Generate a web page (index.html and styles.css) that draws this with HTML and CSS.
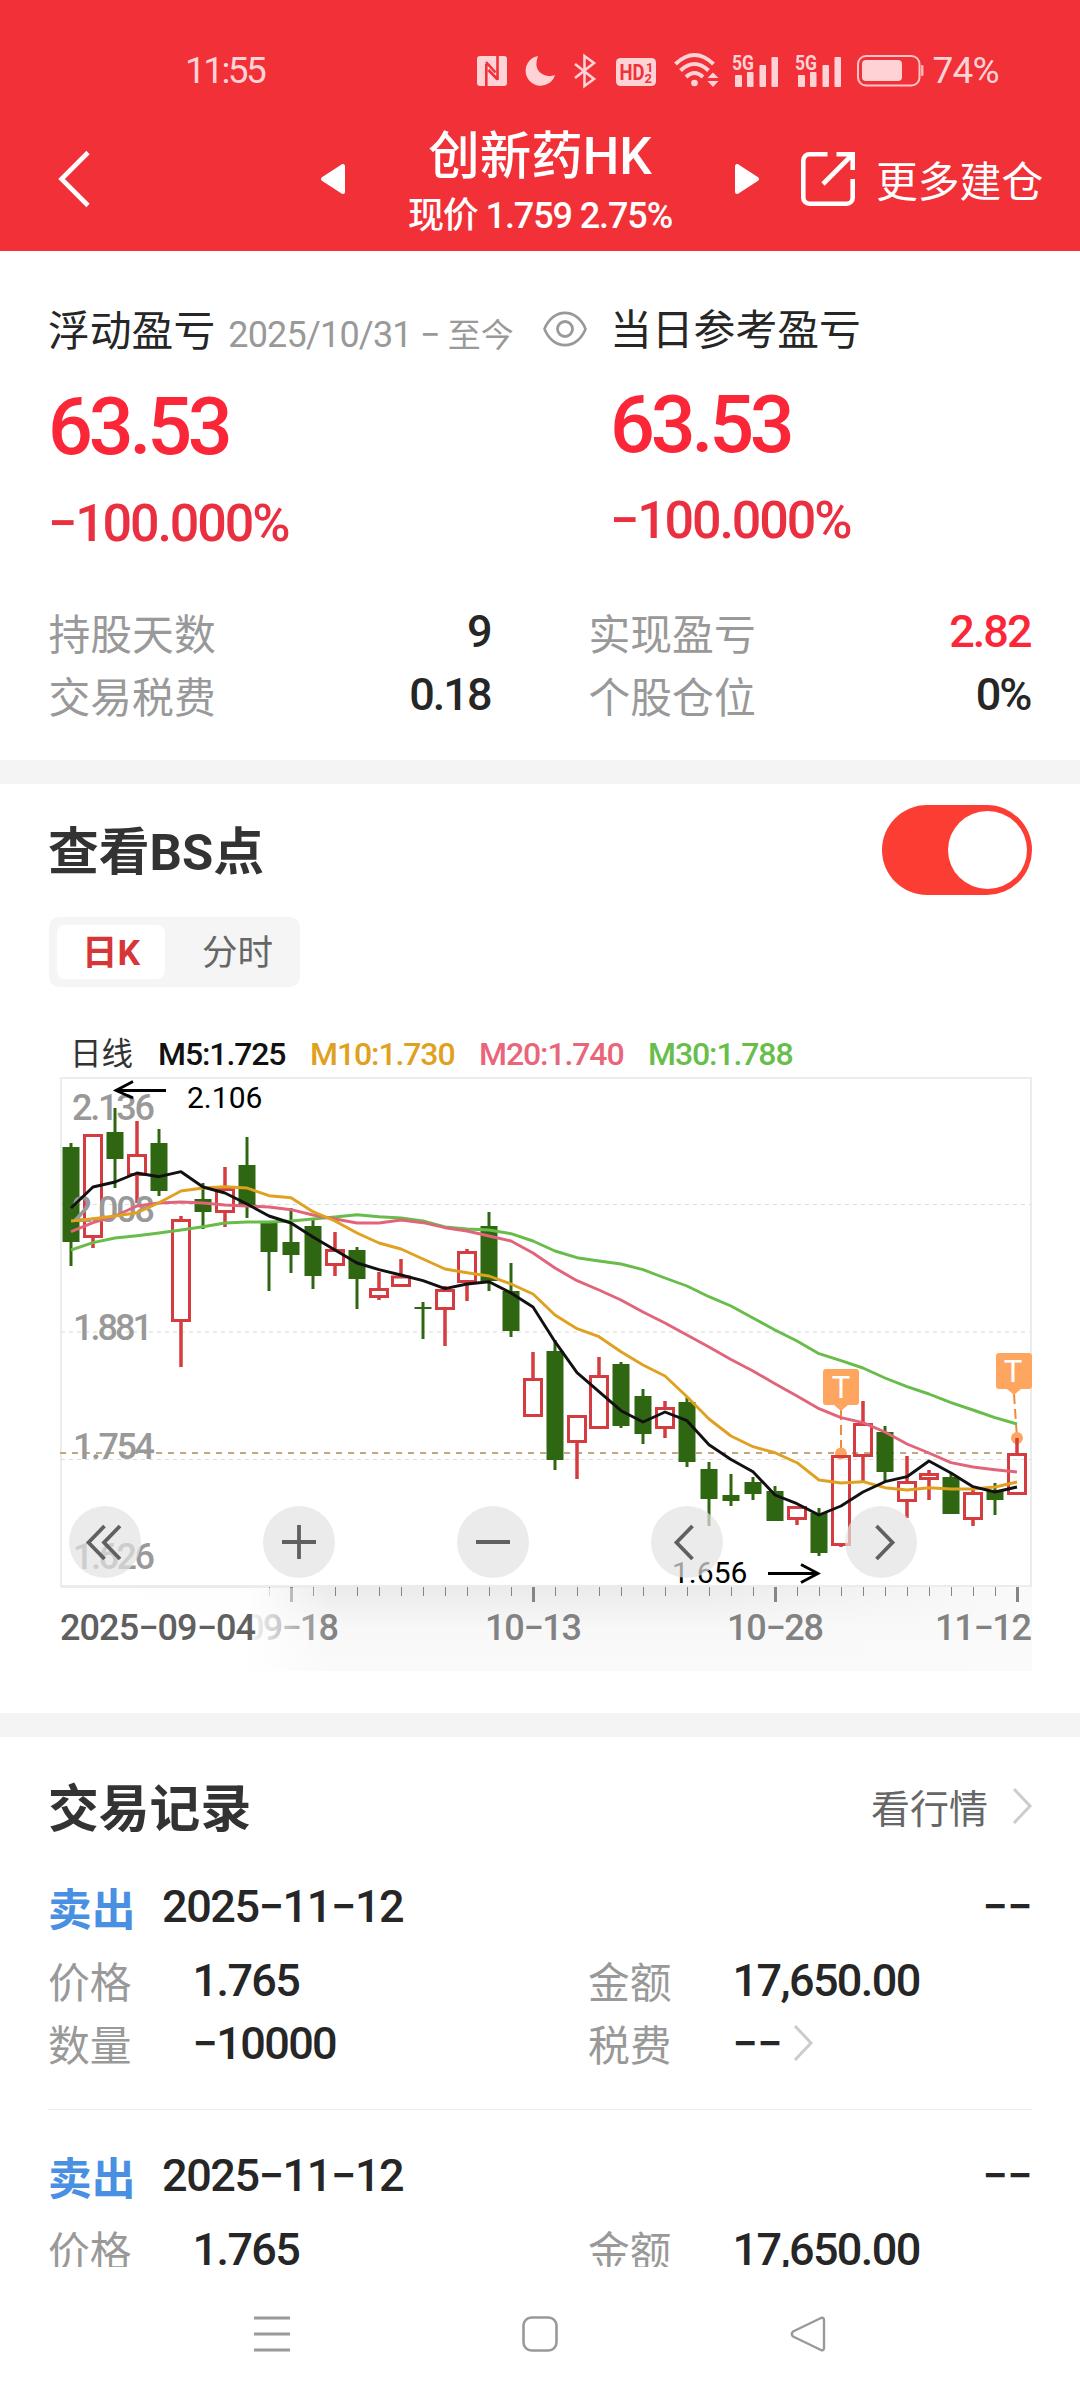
FILE: index.html
```html
<!DOCTYPE html>
<html lang="zh-CN">
<head>
<meta charset="utf-8">
<title>创新药HK</title>
<link rel="stylesheet" href="styles.css">
</head>
<body>
<header class="header">
  <div class="status">
    <span class="clock">11:55</span>
    <svg class="st nfc" width="30" height="30" viewBox="0 0 30 30"><rect width="30" height="30" rx="3" fill="#ffd3d6"/><path d="M9.300 30V8M9 6L18.500 16.500M11.500 14L20.500 23.500M20.500 24V0" fill="none" stroke="#f13038" stroke-width="2.600"/></svg>
    <svg class="st moon" width="30" height="30" viewBox="0 0 30 30"><path d="M13 0A15 15 0 1 0 30 19C21 23 10 16 11.500 6.500C11.700 4 12.500 2 13 0Z" fill="#ffd3d6"/></svg>
    <svg class="st bt" width="22" height="34" viewBox="0 0 22 34"><path d="M1 10L20 25L10.500 32V2L20 9L1 24" fill="none" stroke="#ffd3d6" stroke-width="2.600"/></svg>
    <svg class="st hd" width="40" height="28" viewBox="0 0 40 28"><rect width="40" height="28" rx="4.500" fill="#ffd3d6"/><g fill="#f13038" font-family="Roboto, sans-serif" font-weight="700"><text x="3.500" y="22" font-size="22" textLength="25" lengthAdjust="spacingAndGlyphs">HD</text><text x="30" y="13.500" font-size="13">1</text><text x="28.500" y="25" font-size="13">2</text></g></svg>
    <svg class="st wifi" width="45" height="34" viewBox="0 0 45 34"><g fill="none" stroke="#ffd3d6" stroke-width="4"><path d="M1.500 11Q20.500 -7 39.500 11"/><path d="M6.500 17.500Q20.500 4.500 34.500 17.500"/><path d="M12 24Q20.500 16 29 24"/></g><circle cx="20.500" cy="30" r="3.300" fill="#ffd3d6"/><path d="M33.500 25L39 19.500L44.500 25ZM33.500 28L39 34L44.500 28Z" fill="#ffd3d6"/></svg>
    <svg class="st sig" width="47" height="34" viewBox="0 0 47 34"><g fill="#ffd3d6"><text x="0" y="16" font-size="21" font-family="Roboto, sans-serif" font-weight="700" textLength="22" lengthAdjust="spacingAndGlyphs">5G</text><rect x="3" y="21" width="7" height="12" rx="1"/><rect x="15" y="18" width="6.500" height="15" rx="1"/><rect x="27.500" y="11" width="6.500" height="22" rx="1"/><rect x="39.500" y="3" width="6.500" height="30" rx="1"/></g></svg>
    <svg class="st sig2" width="47" height="34" viewBox="0 0 47 34"><g fill="#ffd3d6"><text x="0" y="16" font-size="21" font-family="Roboto, sans-serif" font-weight="700" textLength="22" lengthAdjust="spacingAndGlyphs">5G</text><rect x="3" y="21" width="7" height="12" rx="1"/><rect x="15" y="18" width="6.500" height="15" rx="1"/><rect x="27.500" y="11" width="6.500" height="22" rx="1"/><rect x="39.500" y="3" width="6.500" height="30" rx="1"/></g></svg>
    <svg class="st bat" width="67" height="32" viewBox="0 0 67 32"><rect x="1" y="1" width="61.500" height="29.500" rx="8" fill="none" stroke="#ffc4c8" stroke-width="2"/><rect x="5" y="5" width="40" height="21" rx="4" fill="#ffd3d6"/><rect x="64" y="10" width="2.500" height="11" rx="1" fill="#ffb0b5"/></svg>
    <span class="charge">74%</span>
  </div>
  <nav class="nav">
    <svg class="back" width="32" height="56" viewBox="0 0 32 56"><path d="M30 1.500L3.500 28L30 54.500" fill="none" stroke="#fff" stroke-width="4.600"/></svg>
    <svg class="prev" width="24" height="30" viewBox="0 0 24 30"><path d="M2 15L22 2V28Z" fill="#fff" stroke="#fff" stroke-width="4" stroke-linejoin="round"/></svg>
    <div class="heading">
      <h1>创新药HK</h1>
      <p>现价 1.759 2.75%</p>
    </div>
    <svg class="next" width="24" height="30" viewBox="0 0 24 30"><path d="M22 15L2 2V28Z" fill="#fff" stroke="#fff" stroke-width="4" stroke-linejoin="round"/></svg>
    <svg class="share" width="54" height="54" viewBox="0 0 54 54"><g fill="none" stroke="#fff" stroke-width="4.600"><path d="M26.500 2.300H8.300A6 6 0 0 0 2.300 8.300V45.700A6 6 0 0 0 8.300 51.700H45.700A6 6 0 0 0 51.700 45.700V27"/><path d="M35.500 2.300H51.700V18M51 3L22 32"/></g></svg>
    <span class="more">更多建仓</span>
  </nav>
</header>
<main class="content">
  <section class="summary">
    <div class="totals">
      <div class="total">
        <div class="total-name"><span class="zh">浮动盈亏</span><span class="range">2025/10/31 − <i>至今</i></span>
          <svg class="eye" width="44" height="36" viewBox="0 0 44 36"><path d="M1.500 18C10 -3.500 34 -3.500 42.500 18C34 39.500 10 39.500 1.500 18Z" fill="none" stroke="#999" stroke-width="2.600"/><circle cx="22" cy="18" r="7.500" fill="none" stroke="#999" stroke-width="2.800"/></svg>
        </div>
        <div class="total-value">63.53</div>
        <div class="total-rate">−100.000%</div>
      </div>
      <div class="total today">
        <div class="total-name"><span class="zh">当日参考盈亏</span></div>
        <div class="total-value">63.53</div>
        <div class="total-rate">−100.000%</div>
      </div>
    </div>
    <div class="stats">
      <div class="stat"><span class="label">持股天数</span><b>9</b></div>
      <div class="stat"><span class="label">实现盈亏</span><b class="gain">2.82</b></div>
      <div class="stat"><span class="label">交易税费</span><b>0.18</b></div>
      <div class="stat"><span class="label">个股仓位</span><b>0%</b></div>
    </div>
  </section>
  <section class="chart-card">
    <div class="card-head"><h2>查看BS点</h2><span class="toggle"></span></div>
    <div class="tabs"><span class="tab on">日K</span><span class="tab">分时</span></div>
    <div class="legend"><span class="k">日线</span><span class="m5">M5:1.725</span><span class="m10">M10:1.730</span><span class="m20">M20:1.740</span><span class="m30">M30:1.788</span></div>
    <svg id="kline" class="kline" width="990" height="600" viewBox="48 1074 990 600">
      <defs>
        <linearGradient id="shade" x1="0" y1="0" x2="0" y2="1"><stop offset="0" stop-color="#ebebeb"/><stop offset=".5" stop-color="#f8f8f8"/><stop offset="1" stop-color="#fafafa"/></linearGradient>
        <linearGradient id="veil" x1="0" y1="0" x2="1" y2="0"><stop offset="0" stop-color="#fff"/><stop offset=".7" stop-color="#fff" stop-opacity=".94"/><stop offset="1" stop-color="#fff" stop-opacity="0"/></linearGradient>
        <linearGradient id="light" x1="0" y1="0" x2="1" y2="0"><stop offset="0" stop-color="#fafafa" stop-opacity="0"/><stop offset="1" stop-color="#fafafa"/></linearGradient>
      </defs>
      <rect x="61" y="1587" width="971" height="84" fill="url(#shade)"/>
      <rect x="700" y="1587" width="332" height="84" fill="url(#light)"/>
      <rect x="61" y="1078" width="970" height="508" fill="none" stroke="#ececec" stroke-width="2"/>
      <g stroke="#dcdcdc" stroke-dasharray="4 4"><path d="M61 1204.500H1031M61 1459.500H1031"/><path d="M61 1332H1031" stroke="#ebebeb" stroke-width="2"/></g>
      <path d="M60 1453H1006" stroke="#c0a880" stroke-width="2" stroke-dasharray="6 6"/>
      <g id="marks" stroke="#f0893a" stroke-width="2" stroke-dasharray="10 5"><path d="M841 1410V1453M1014 1394L1017 1438"/></g>
      <g fill="#fea55f"><circle cx="841" cy="1453.500" r="6"/><circle cx="1017" cy="1438" r="6"/><path d="M834 1405H848L841 1411ZM1007 1389H1021L1014 1395Z"/><rect x="823" y="1369" width="36" height="36" rx="3"/><rect x="996" y="1353" width="36" height="36" rx="3"/></g>
      <g fill="#fff" font-family="Roboto, sans-serif" font-size="31" text-anchor="middle"><text x="841" y="1398">T</text><text x="1013" y="1382">T</text></g>
      <g id="candles"></g>
      <g class="price"><text x="72" y="1120" textLength="83">2.136</text><text x="72" y="1222" textLength="83">2.008</text><text x="73" y="1340" textLength="80">1.881</text><text x="73" y="1459" textLength="82">1.754</text><text x="73" y="1569" textLength="82">1.626</text></g>
      <g id="lines" fill="none" stroke-width="2.900" stroke-linejoin="round"></g>
      <g class="extreme"><text x="187" y="1108">2.106</text><text x="672" y="1583">1.656</text></g>
      <path d="M166 1090.500H116M133 1081.500L116 1090.500L133 1098M768 1573.500H818M801 1564.500L818 1573.500L801 1582.500" fill="none" stroke="#000" stroke-width="2.800"/>
      <g fill="#e3e3e3" fill-opacity=".7"><circle cx="105" cy="1542" r="36"/><circle cx="299" cy="1542" r="36"/><circle cx="493" cy="1542" r="36"/><circle cx="687" cy="1542" r="36"/><circle cx="881" cy="1542" r="36"/></g>
      <path d="M104.500 1526L88.500 1542.500L104.500 1559M120 1526L104 1542.500L120 1559M282 1542H316M299 1525V1559M476 1542H510M692.500 1526L676.500 1542.500L692.500 1559M876.500 1526L892.500 1542.500L876.500 1559" fill="none" stroke="#606060" stroke-width="3.800"/>
      <g id="ticks" fill="#858585"></g>
      <g class="axis"><text x="244" y="1640" textLength="95">09−18</text><text x="485" y="1640" textLength="97">10−13</text><text x="727" y="1640" textLength="97">10−28</text><text x="935" y="1640" textLength="97">11−12</text></g>
      <rect x="60" y="1588" width="270" height="84" fill="url(#veil)"/>
      <text class="from" x="60" y="1640" textLength="196">2025−09−04</text>
    </svg>
  </section>
  <section class="records">
    <div class="records-head"><h2>交易记录</h2><span class="link">看行情<svg width="20" height="36" viewBox="0 0 20 36"><path d="M2 1L18 18L2 35" fill="none" stroke="#ccc" stroke-width="3"/></svg></span></div>
    <article class="record">
      <div class="record-head"><strong>卖出</strong><time>2025−11−12</time><b class="dash">−−</b></div>
      <div class="fields">
        <div class="field"><span class="label">价格</span><b>1.765</b></div>
        <div class="field"><span class="label">金额</span><b>17,650.00</b></div>
        <div class="field"><span class="label">数量</span><b>−10000</b></div>
        <div class="field"><span class="label">税费</span><b class="dash">−−</b><svg width="20" height="36" viewBox="0 0 20 36"><path d="M2 1L18 18L2 35" fill="none" stroke="#ccc" stroke-width="3"/></svg></div>
      </div>
    </article>
    <article class="record">
      <div class="record-head"><strong>卖出</strong><time>2025−11−12</time><b class="dash">−−</b></div>
      <div class="fields">
        <div class="field"><span class="label">价格</span><b>1.765</b></div>
        <div class="field"><span class="label">金额</span><b>17,650.00</b></div>
      </div>
    </article>
  </section>
</main>
<footer class="sysnav">
  <svg width="36" height="36" viewBox="0 0 36 36"><path d="M0 2H36M0 18H36M0 34H36" stroke="#999" stroke-width="3"/></svg>
  <svg width="36" height="36" viewBox="0 0 36 36"><rect x="1.500" y="1.500" width="33" height="33" rx="8" fill="none" stroke="#999" stroke-width="2.600"/></svg>
  <svg width="36" height="36" viewBox="0 0 36 36"><path d="M3 15.500Q.5 18 3 20.500L31 34Q34 35 34 32V4Q34 1 31 2Z" fill="none" stroke="#999" stroke-width="2.400" stroke-linejoin="round"/></svg>
</footer>
<script src="chart.js"></script>
</body>
</html>
```
FILE: styles.css
```css
* { box-sizing: border-box; margin: 0; padding: 0; }
body {
  width: 1080px; height: 2400px; overflow: hidden;
  display: flex; flex-direction: column;
  background: #fff; color: #262626;
  font-family: Roboto, "Noto Sans CJK SC", sans-serif;
}
svg { display: block; flex: none; overflow: visible; }
span, b, time, strong { white-space: nowrap; }
h1, h2, i { font-style: normal; }

.header { height: 251px; flex: none; background: #f13038; color: #fff; }
.status { display: flex; align-items: center; height: 107px; padding: 35px 0 0 185px; color: #ffd3d6; }
.clock { width: 292px; font-size: 37px; letter-spacing: -2.600px; line-height: 60px; }
.moon { margin-left: 17.5px; }
.bt { margin-left: 19px; }
.hd { margin-left: 20.500px; margin-top: 2px; }
.wifi { margin-left: 17.500px; margin-top: -2px; }
.sig { margin-left: 13px; margin-top: -1px; }
.sig2 { margin-left: 16px; margin-top: -1px; }
.bat { margin-left: 15px; }
.charge { margin-left: 9px; font-size: 37px; letter-spacing: -.8px; line-height: 60px; }

.nav { display: flex; align-items: center; height: 144px; }
.back { margin-left: 58px; }
.prev { margin-left: 231px; }
.heading { width: 390px; height: 144px; text-align: center; }
.heading h1 { height: 66px; margin-top: 17px; font-size: 51.500px; font-weight: 500; line-height: 66px; }
.heading p { height: 44px; margin-top: 4px; font-size: 36px; font-weight: 500; line-height: 44px; letter-spacing: -1.100px; }
.share { margin-left: 42px; }
.more { margin-left: 21px; font-family: "Noto Sans CJK SC", sans-serif; font-size: 41.800px; line-height: 60px; }

.content { height: 2016px; flex: none; overflow: hidden; }
.summary { height: 509px; padding-top: 37px; }
.totals { display: flex; padding-left: 48px; height: 312px; }
.total { width: 563px; }
.today { width: auto; margin: -3px 0 0 -1px; }
.total-name { display: flex; align-items: center; height: 80px; line-height: 60px; }
.zh { font-family: "Noto Sans CJK SC", sans-serif; font-size: 41.800px; }
.range { margin: 15px 0 0 13px; font-size: 36px; letter-spacing: -.8px; color: #999; }
.range i { font-size: 33px; letter-spacing: 0; }
.eye { margin-left: auto; margin-right: 24px; margin-top: 1px; }
.total-value { height: 116px; line-height: 119px; font-size: 79px; font-weight: 500; letter-spacing: -4.200px; color: #fb2738; }
.total-rate { height: 77px; line-height: 80px; font-size: 52px; font-weight: 500; letter-spacing: -2.100px; color: #ea3040; }
.today .total-name { height: 84px; }
.today .total-value { height: 108px; line-height: 112px; }
.today .total-rate { height: 85px; line-height: 87px; }
.stats { display: grid; grid-template-columns: 442px 442px; column-gap: 98px; grid-auto-rows: 63px; padding-left: 48.500px; }
.stat { display: flex; align-items: center; justify-content: space-between; }
.label { font-family: "Noto Sans CJK SC", sans-serif; font-size: 41.800px; line-height: 60px; color: #999; }
b, time { font-size: 45px; font-weight: 500; line-height: 62px; letter-spacing: -1.600px; }
.stat b { letter-spacing: -2px; }
.gain { color: #fb2738; }

.chart-card { height: 953px; padding: 21px 48px 0; border-top: 24px solid #f4f4f4; }
.card-head { display: flex; align-items: center; justify-content: space-between; height: 90px; }
h2 { padding-top: 6px; font-family: Roboto, "Noto Sans CJK SC", sans-serif; font-size: 50.800px; font-weight: 700; line-height: 68px; color: #333; }
.toggle { width: 150px; height: 90px; padding: 6px 5px; border-radius: 45px; background: #fc3d33; }
.toggle::after { content: ""; display: block; width: 79px; height: 78px; margin-left: auto; border-radius: 50%; background: #fff; }
.tabs { display: flex; justify-content: space-between; width: 251px; height: 70px; margin: 22px 0 0 1px; padding: 8px; border-radius: 10px; background: #f5f5f5; }
.tab { width: 108px; height: 54px; border-radius: 8px; font-size: 35.500px; line-height: 57px; text-align: center; color: #666; }
.tab + .tab { width: 109px; }
.tab.on { background: #fff; font-weight: 700; color: #d63638; }
.legend { display: flex; height: 40px; margin-top: 47px; padding-left: 22px; font-size: 32px; font-weight: 500; line-height: 40px; letter-spacing: -1.100px; }
.legend span { width: 169px; }
.legend .k { width: 88px; font-family: "Noto Sans CJK SC", sans-serif; font-size: 31.500px; font-weight: 400; letter-spacing: 0; color: #333; line-height: 35px; }
.legend .m5 { width: 152px; color: #111; }
.m10 { color: #e0a020; }
.m20 { color: #e9667a; }
.m30 { color: #67be4b; }
.kline { font-family: Roboto, sans-serif; }
.price { font-size: 36px; font-weight: 500; fill: #999; }
.extreme { font-size: 30px; fill: #000; }
.axis { font-size: 36px; font-weight: 500; fill: #828282; }
.from { font-size: 36px; font-weight: 500; fill: #606060; }

.records { border-top: 24px solid #f4f4f4; padding: 36px 48px 0; }
.records-head { display: flex; justify-content: space-between; align-items: center; height: 68px; }
.link { display: flex; align-items: center; gap: 24px; font-family: "Noto Sans CJK SC", sans-serif; font-size: 39px; line-height: 56px; height: 60px; padding-bottom: 2px; color: #666; }
.record { height: 269px; padding-top: 33px; border-bottom: 1px solid #ececec; }
.record-head { display: flex; align-items: center; height: 64px; }
strong { width: 114px; padding-top: 1px; font-family: "Noto Sans CJK SC", sans-serif; font-size: 43.800px; font-weight: 700; line-height: 62px; color: #4a90e2; }
.record-head time { letter-spacing: -1.400px; }
.record-head time, .record-head .dash, .field b { padding-top: 2px; }
b.dash { letter-spacing: -.5px; }
.record-head .dash { margin-left: auto; }
.fields { display: grid; grid-template-columns: 540px 444px; grid-auto-rows: 63.500px; margin-top: 10px; }
.field { display: flex; align-items: center; }
.field .label { width: 144.500px; }
.field svg { margin-left: 11px; }

.sysnav { display: flex; align-items: center; height: 133px; padding-left: 254px; gap: 232px; }
```
FILE: chart.js
```javascript
// Each candle: direction, high, body top, body bottom, low (plot y coordinates).
const candles = [
  ['g',1143,1147,1242,1266],['r',1134,1134,1238,1248],['g',1108,1132,1159,1188],['r',1121,1154,1176,1203],
  ['g',1129,1143,1191,1196],['r',1216,1219,1322,1367],['g',1183,1199,1212,1229],['r',1167,1188,1213,1227],
  ['g',1137,1165,1206,1218],['g',1223,1223,1252,1291],['g',1208,1242,1255,1273],['g',1220,1226,1276,1289],
  ['r',1232,1249,1266,1276],['g',1247,1250,1279,1309],['r',1272,1288,1298,1300],['r',1259,1275.500,1287,1287],
  ['g',1302,1307,1309,1339],['r',1286,1289,1310,1346],['r',1249,1251,1283,1301],['g',1212,1226,1281,1291],
  ['g',1263,1291,1331,1337],['r',1352,1378,1417,1417],['g',1340,1351,1460,1470],['r',1415,1415,1443,1479],
  ['r',1357,1375,1429,1429],['g',1362,1364,1426,1428],['g',1389,1396,1434,1444],['r',1401,1407,1429,1438],
  ['g',1397,1402,1462,1467],['g',1462,1469,1499,1526],['g',1474,1495,1501,1506],['g',1477,1482,1494,1500],
  ['g',1486,1491,1521,1521],['r',1506,1506,1520,1525],['g',1508,1513,1553,1556],['r',1455,1455,1546,1547],
  ['r',1401,1423,1457,1483],['g',1426,1432,1472,1482],['r',1456,1481,1502,1518],['r',1470,1473,1480,1500],
  ['g',1473,1477,1514,1514],['r',1490,1492,1520,1526],['g',1483,1490,1500,1515],['r',1438,1453,1495,1495]
];
const averages = {
  '#111': [1208,1187,1182,1173,1176.700,1171.700,1187,1193,1204,1216,1223,1237,1250,1263,1269.700,1275,1280.700,1288.700,1284,1281.700,1293,1307,1341.700,1372.700,1391.700,1410.700,1422,1412,1420.700,1444.700,1459.500,1471.700,1495,1503.700,1515,1506,1492,1481.700,1476.700,1461,1473,1486.700,1492,1487],
  '#e0a020': [1221,1218.700,1216,1212.700,1202.700,1191,1188,1186.700,1188,1195.700,1197.700,1211.700,1221,1233,1243,1249,1259,1269,1272.700,1276,1284,1294,1315,1328.700,1336.700,1351.700,1365,1376,1396.700,1419,1436,1446.700,1452.700,1462.700,1480,1483,1481.700,1487.700,1490,1487.700,1489,1489,1487,1482],
  '#e2647a': [1231.700,1222.700,1216,1206,1203,1202,1203,1205,1206,1207,1209.700,1215,1219,1223,1223,1220,1222.700,1227.700,1231,1236,1241,1253,1268,1280.700,1290,1300,1312,1323,1335,1347,1359.500,1371,1383.700,1396,1408.700,1417.700,1422.700,1432,1444,1453,1462.700,1467,1469.700,1472],
  '#68bc4a': [1250,1242.700,1238,1235.700,1233,1230,1226.700,1223,1222,1222,1221,1219,1217,1214.700,1216.700,1218,1221,1227,1229,1230,1233.700,1241,1251,1257.700,1261,1264,1269.700,1278,1286,1296.700,1306,1318,1330,1341,1353.700,1360.700,1368,1378,1386.700,1394,1402.700,1410,1417.700,1424]
};
const GREEN = '#2f6611', RED = '#d43c3f';
const xAt = i => 71 + 22 * i;

document.getElementById('candles').innerHTML = candles.map(([dir, high, top, bottom, low], i) => {
  const x = xAt(i);
  if (dir === 'g') {
    return `<path d="M${x} ${high}V${low}" stroke="${GREEN}" stroke-width="3"/><rect x="${x - 8.5}" y="${top}" width="17" height="${bottom - top}" fill="${GREEN}"/>`;
  }
  return `<path d="M${x} ${high}V${top}M${x} ${bottom}V${low}" stroke="${RED}" stroke-width="3.5"/><rect x="${x - 8.5}" y="${top + 1.5}" width="17" height="${bottom - top - 3}" fill="none" stroke="${RED}" stroke-width="3"/>`;
}).join('');

document.getElementById('lines').innerHTML = Object.entries(averages).reverse().map(([color, ys]) =>
  `<polyline stroke="${color}" points="${ys.map((y, i) => xAt(i) + ',' + y).join(' ')}"/>`).join('');

let ticks = '';
for (let i = 9; i < 44; i++) {
  const major = i % 11 === 10;
  ticks += `<rect x="${major ? xAt(i) - 1 : xAt(i)}" y="1587" width="${major ? 3 : 1}" height="${major ? 15 : 9}"/>`;
}
document.getElementById('ticks').innerHTML = ticks;
```
